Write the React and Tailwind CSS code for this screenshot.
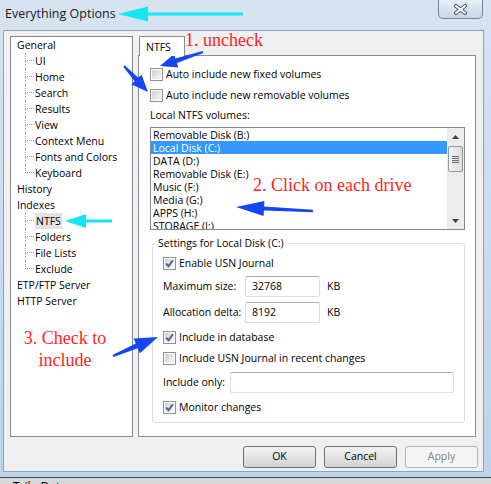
import React from "react";

const drives = [
  "Removable Disk (B:)",
  "Local Disk (C:)",
  "DATA (D:)",
  "Removable Disk (E:)",
  "Music (F:)",
  "Media (G:)",
  "APPS (H:)",
  "STORAGE (I:)",
];

const tree = [
  { label: "General" },
  { label: "UI", child: true },
  { label: "Home", child: true },
  { label: "Search", child: true },
  { label: "Results", child: true },
  { label: "View", child: true },
  { label: "Context Menu", child: true },
  { label: "Fonts and Colors", child: true },
  { label: "Keyboard", child: true, last: true },
  { label: "History" },
  { label: "Indexes" },
  { label: "NTFS", child: true, selected: true },
  { label: "Folders", child: true },
  { label: "File Lists", child: true },
  { label: "Exclude", child: true, last: true },
  { label: "ETP/FTP Server" },
  { label: "HTTP Server" },
];

// polygon for a (tapered) arrow from tail (x1,y1) to tip (x2,y2)
function arrowPoints(x1, y1, x2, y2, w0, w1, hl, hw) {
  const dx = x2 - x1;
  const dy = y2 - y1;
  const len = Math.hypot(dx, dy);
  const ux = dx / len;
  const uy = dy / len;
  const nx = -uy;
  const ny = ux;
  const bx = x2 - ux * hl;
  const by = y2 - uy * hl;
  const pts = [
    [x1 + nx * w0, y1 + ny * w0],
    [bx + nx * w1, by + ny * w1],
    [bx + nx * hw, by + ny * hw],
    [x2, y2],
    [bx - nx * hw, by - ny * hw],
    [bx - nx * w1, by - ny * w1],
    [x1 - nx * w0, y1 - ny * w0],
  ];
  return pts.map(([x, y]) => `${x.toFixed(1)},${y.toFixed(1)}`).join(" ");
}

const arrows = [
  { c: "#14e6f4", a: [243, 14, 118, 14, 1.5, 1.5, 30, 7.5] },
  { c: "#14e6f4", a: [112, 221, 65, 221, 1.5, 1.5, 21, 7] },
  { c: "#1446f5", a: [203, 52, 160, 66, 1, 2.5, 17, 7] },
  { c: "#1446f5", a: [124, 66, 148, 92, 1, 2.5, 17, 7] },
  { c: "#1446f5", a: [313, 211, 236, 207, 1.2, 2, 28, 7.5] },
  { c: "#1446f5", a: [113, 356, 158, 337, 1.2, 2.5, 23, 8] },
];

function Check({ checked }) {
  return (
    <span className="w-[13px] h-[13px] shrink-0 border border-[#8e8f8f] bg-white p-[1px] flex">
      <span className="flex-1 bg-linear-to-br from-[#cbcfd5] to-[#f7f7f7] flex items-center justify-center">
        {checked && (
          <svg width="9" height="9" viewBox="0 0 9 9">
            <path d="M1.2 4.6 L3.5 7.2 L7.9 1.2" fill="none" stroke="#4a5f8e" strokeWidth="1.9" />
          </svg>
        )}
      </span>
    </span>
  );
}

function CheckRow({ checked, label, className = "" }) {
  return (
    <div className={`h-[18px] flex items-center gap-[3px] whitespace-nowrap ${className}`}>
      <Check checked={checked} />
      <span className="pt-[1px]">{label}</span>
    </div>
  );
}

function TextBox({ value, className = "" }) {
  return (
    <div
      className={`h-[21px] shrink-0 border border-[#dbdfe6] border-t-[#abadb3] rounded-[2px] bg-white pl-[6px] flex items-center ${className}`}
    >
      {value}
    </div>
  );
}

function Button({ children, disabled }) {
  return (
    <div
      className={`w-[73px] h-[22px] rounded-[3px] border flex items-center justify-center ${
        disabled
          ? "border-[#adb2b5] bg-[#f4f4f4] text-[#838383]"
          : "border-[#707070] bg-linear-to-b from-[#f2f2f2] via-[#e4e4e4] to-[#d3d3d3]"
      }`}
    >
      {children}
    </div>
  );
}

function TreeRow({ item }) {
  if (!item.child) {
    return <div className="h-[16px] pt-[1px] flex items-center whitespace-nowrap">{item.label}</div>;
  }
  return (
    <div className="h-[16px] flex items-center ml-[8px] whitespace-nowrap">
      <span className="w-[9px] h-[16px] flex flex-col shrink-0">
        <span className="h-[8px] border-l border-b border-dotted border-[#9a9a9a]" />
        <span className={`h-[8px] ${item.last ? "" : "border-l border-dotted border-[#9a9a9a]"}`} />
      </span>
      <span className={`ml-[1px] leading-[15px] pt-[1px] ${item.selected ? "bg-[#e2e2e2] px-[1px]" : ""}`}>
        {item.label}
      </span>
    </div>
  );
}

function Scrollbar() {
  return (
    <div className="w-[17px] shrink-0 bg-[#ececec] flex flex-col items-stretch">
      <div className="h-[17px] flex items-center justify-center">
        <svg width="7" height="4" viewBox="0 0 7 4">
          <path d="M0 4 L3.5 0 L7 4 Z" fill="#404040" />
        </svg>
      </div>
      <div className="h-[26px] mt-[1px] mx-[1px] rounded-[2px] border border-[#979797] bg-linear-to-r from-[#f3f3f3] to-[#dcdcdc] flex flex-col items-center justify-center gap-[1px]">
        <span className="w-[7px] h-[1px] bg-[#6a6a6a]" />
        <span className="w-[7px] h-[1px] bg-[#6a6a6a]" />
        <span className="w-[7px] h-[1px] bg-[#6a6a6a]" />
        <span className="w-[7px] h-[1px] bg-[#6a6a6a]" />
      </div>
      <div className="flex-1" />
      <div className="h-[17px] flex items-center justify-center">
        <svg width="7" height="4" viewBox="0 0 7 4">
          <path d="M0 0 L3.5 4 L7 0 Z" fill="#404040" />
        </svg>
      </div>
    </div>
  );
}

export default function App() {
  return (
    <div className="relative w-[491px] h-[484px] overflow-hidden bg-[#d8d8d8] text-[10.5px] text-black font-['Open_Sans',sans-serif]">
      <div className="h-[478px] flex flex-col bg-linear-to-b from-[#d6e4f1] to-[#bed3e8] border-b border-[#3a4858]">
        {/* title bar */}
        <div className="h-[30px] flex items-start justify-between">
          <div className="pl-[5px] pt-[6px] text-[12.5px] leading-[16px] text-[#1a1a1a]">Everything Options</div>
          <div className="mr-[8px] w-[45px] h-[19px] rounded-b-[5px] border border-t-0 border-[#71859c] bg-linear-to-b from-[#e8eff7] to-[#c6d6e7] flex items-center justify-center">
            <svg width="15" height="11" viewBox="0 0 15 11">
              <path d="M3 2 L12 9 M12 2 L3 9" stroke="#4b5a6c" strokeWidth="4" strokeLinecap="round" />
              <path d="M3 2 L12 9 M12 2 L3 9" stroke="#ffffff" strokeWidth="2" strokeLinecap="round" />
            </svg>
          </div>
        </div>

        {/* client area */}
        <div className="ml-[3px] w-[481px] h-[442px] border border-[#8ea3b9] bg-[#f0f0f0] pl-[6px] pt-[5px] flex flex-col">
          <div className="flex gap-[5px]">
            {/* tree */}
            <div className="w-[123px] h-[401px] border border-[#828790] bg-white pl-[6px] flex flex-col">
              {tree.map((t) => (
                <TreeRow key={t.label} item={t} />
              ))}
            </div>

            {/* tab control */}
            <div className="w-[338px] flex flex-col">
              <div className="relative z-10 ml-[1px] w-[46px] h-[20px] -mb-[1px] border border-b-0 border-[#898c95] bg-white pl-[6px] pt-[3px]">
                NTFS
              </div>
              <div className="h-[382px] border border-[#898c95] bg-white pl-[11px] pt-[9px] flex flex-col">
                <CheckRow label="Auto include new fixed volumes" />
                <CheckRow label="Auto include new removable volumes" className="mt-[3px]" />
                <div className="h-[18px] mt-[2px] pt-[1px] flex items-center">Local NTFS volumes:</div>

                <div className="mt-[3px] w-[315px] h-[103px] border border-[#828790] bg-white flex overflow-hidden">
                  <div className="flex-1 flex flex-col">
                    {drives.map((d, i) => (
                      <div
                        key={d}
                        className={`h-[13px] shrink-0 leading-[14px] pl-[2px] ${i === 1 ? "bg-[#3399ff] text-white" : ""}`}
                      >
                        {d}
                      </div>
                    ))}
                  </div>
                  <Scrollbar />
                </div>

                <fieldset className="ml-[2px] mt-[5px] w-[313px] border border-[#d5dfe5] rounded-[3px] pb-[6px]">
                  <legend className="ml-[3px] px-[2px] leading-[16px]">Settings for Local Disk (C:)</legend>
                  <div className="pl-[10px] flex flex-col">
                    <CheckRow checked label="Enable USN Journal" className="mt-[3px]" />
                    <div className="mt-[4px] h-[21px] flex items-center whitespace-nowrap">
                      <span className="w-[82px] shrink-0">Maximum size:</span>
                      <TextBox value="32768" className="w-[75px]" />
                      <span className="ml-[7px]">KB</span>
                    </div>
                    <div className="mt-[5px] h-[21px] flex items-center whitespace-nowrap">
                      <span className="w-[82px] shrink-0">Allocation delta:</span>
                      <TextBox value="8192" className="w-[75px]" />
                      <span className="ml-[7px]">KB</span>
                    </div>
                    <CheckRow checked label="Include in database" className="mt-[5px]" />
                    <CheckRow label="Include USN Journal in recent changes" className="mt-[3px]" />
                    <div className="mt-[5px] h-[21px] flex items-center whitespace-nowrap">
                      <span className="w-[67px] shrink-0">Include only:</span>
                      <TextBox value="" className="w-[224px]" />
                    </div>
                    <CheckRow checked label="Monitor changes" className="mt-[5px]" />
                  </div>
                </fieldset>
              </div>
            </div>
          </div>

          <div className="mt-[9px] pr-[5px] flex justify-end gap-[8px]">
            <Button>OK</Button>
            <Button>Cancel</Button>
            <Button disabled>Apply</Button>
          </div>
        </div>
      </div>

      <div className="pl-[13px] pt-[2px] text-[12px] leading-[14px]">TrikeData</div>

      {/* annotations */}
      <svg className="absolute inset-0 pointer-events-none" width="491" height="484">
        {arrows.map((ar, i) => (
          <polygon key={i} points={arrowPoints(...ar.a)} fill={ar.c} />
        ))}
      </svg>
      <div className="absolute left-[185px] top-[30px] text-[18px] leading-[20px] text-[#ff1f1f] font-['Liberation_Serif',serif]">
        1. uncheck
      </div>
      <div className="absolute left-[253px] top-[175px] text-[18px] leading-[20px] text-[#ff1f1f] font-['Liberation_Serif',serif]">
        2. Click on each drive
      </div>
      <div className="absolute left-[14px] top-[327px] w-[102px] text-center text-[18px] leading-[22px] text-[#ff1f1f] font-['Liberation_Serif',serif]">
        3. Check to
        <br />
        include
      </div>
    </div>
  );
}
